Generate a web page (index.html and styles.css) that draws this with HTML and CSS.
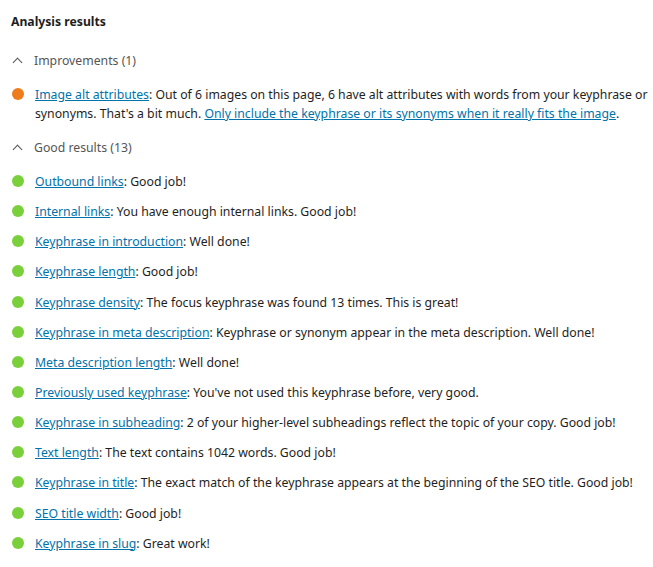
FILE: index.html
```html
<!DOCTYPE html>
<html>

<head>
    <title>Analysis results</title>
    <link rel="stylesheet" href="styles.css">
</head>

<body>
    <div class="analysis">
        <h2>Analysis results</h2>

        <div class="group">
            <div class="group-head"><span class="chevron"></span>Improvements (1)</div>
            <ul class="results">
                <li><span class="bullet orange"></span>
                    <p><a href="#">Image alt attributes</a>: Out of 6 images on this page, 6 have alt attributes with words from your keyphrase or synonyms. That's a bit much. <a href="#">Only include the keyphrase or its synonyms when it really fits the image</a>.</p>
                </li>
            </ul>
        </div>

        <div class="group">
            <div class="group-head"><span class="chevron"></span>Good results (13)</div>
            <ul class="results">
                <li><span class="bullet green"></span><p><a href="#">Outbound links</a>: Good job!</p></li>
                <li><span class="bullet green"></span><p><a href="#">Internal links</a>: You have enough internal links. Good job!</p></li>
                <li><span class="bullet green"></span><p><a href="#">Keyphrase in introduction</a>: Well done!</p></li>
                <li><span class="bullet green"></span><p><a href="#">Keyphrase length</a>: Good job!</p></li>
                <li><span class="bullet green"></span><p><a href="#">Keyphrase density</a>: The focus keyphrase was found 13 times. This is great!</p></li>
                <li><span class="bullet green"></span><p><a href="#">Keyphrase in meta description</a>: Keyphrase or synonym appear in the meta description. Well done!</p></li>
                <li><span class="bullet green"></span><p><a href="#">Meta description length</a>: Well done!</p></li>
                <li><span class="bullet green"></span><p><a href="#">Previously used keyphrase</a>: You've not used this keyphrase before, very good.</p></li>
                <li><span class="bullet green"></span><p><a href="#">Keyphrase in subheading</a>: 2 of your higher-level subheadings reflect the topic of your copy. Good job!</p></li>
                <li><span class="bullet green"></span><p><a href="#">Text length</a>: The text contains 1042 words. Good job!</p></li>
                <li><span class="bullet green"></span><p><a href="#">Keyphrase in title</a>: The exact match of the keyphrase appears at the beginning of the SEO title. Good job!</p></li>
                <li><span class="bullet green"></span><p><a href="#">SEO title width</a>: Good job!</p></li>
                <li><span class="bullet green"></span><p><a href="#">Keyphrase in slug</a>: Great work!</p></li>
            </ul>
        </div>
    </div>
</body>

</html>
```
FILE: styles.css
```css
body {
    margin: 0;
    background-color: #fff;
    color: #1e1e1e;
    font-family: "Noto Sans", "Open Sans", sans-serif;
    font-size: 12.25px;
}

.analysis {
    padding: 12px 0 0 11px;
}

h2 {
    margin: 0 0 20px 0;
    font-size: 12.2px;
    font-weight: 700;
    line-height: 19px;
}

.group-head {
    display: flex;
    align-items: center;
    height: 19px;
    color: #555;
}

.chevron {
    width: 6px;
    height: 6px;
    border-left: 1.5px solid #555;
    border-top: 1.5px solid #555;
    transform: rotate(45deg);
    margin: 4px 13px 0 3px;
}

.results {
    list-style: none;
    margin: 15px 0 15px 0;
    padding: 0;
}

.results li {
    display: flex;
    align-items: flex-start;
    margin-bottom: 11.15px;
}

.results li:last-child {
    margin-bottom: 0;
}

.bullet {
    flex: none;
    width: 12px;
    height: 12px;
    border-radius: 50%;
    margin: 3px 11px 0 1px;
}

.orange {
    background-color: #ee7c1b;
}

.green {
    background-color: #7ad03a;
}

.results p {
    margin: 0;
    line-height: 19px;
}

a {
    color: #0073aa;
    text-decoration: underline;
}
```
